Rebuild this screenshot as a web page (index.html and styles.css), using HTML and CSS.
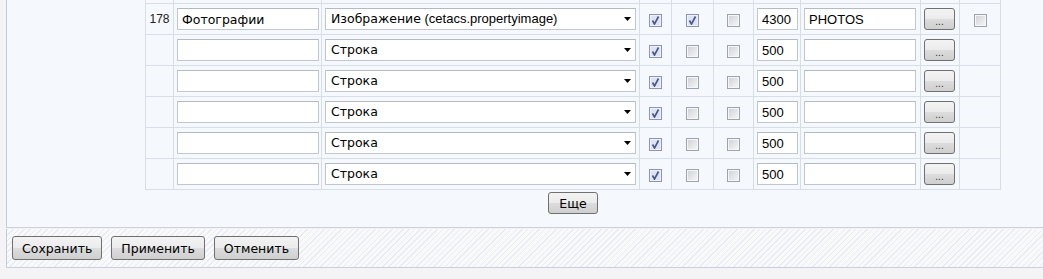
FILE: index.html
```html
<!DOCTYPE html>
<html lang="ru">
<head>
    <meta charset="UTF-8">
    <meta name="viewport" content="width=device-width, initial-scale=1.0">
    <title>Свойства инфоблока</title>
    <link rel="stylesheet" href="styles.css">
</head>
<body>

    <div class="page">

        <!-- Property list -->
        <div class="panel">
            <table class="props">
                <colgroup>
                    <col class="c-id">
                    <col class="c-name">
                    <col class="c-type">
                    <col class="c-flag">
                    <col class="c-flag2">
                    <col class="c-flag3">
                    <col class="c-sort">
                    <col class="c-code">
                    <col class="c-more">
                    <col class="c-del">
                </colgroup>
                <!-- previous row, scrolled out of view -->
                <tr class="gone">
                    <td></td><td></td><td></td><td></td><td></td>
                    <td></td><td></td><td></td><td></td><td></td>
                </tr>
                <tr>
                    <td class="id">178</td>
                    <td><input class="field name" type="text" value="Фотографии"></td>
                    <td><div class="field select"><span class="cyr">Изображение</span> (cetacs.propertyimage)</div></td>
                    <td class="mid"><input class="cb" type="checkbox" checked></td>
                    <td class="mid"><input class="cb" type="checkbox" checked></td>
                    <td class="mid"><input class="cb" type="checkbox"></td>
                    <td><input class="field sort" type="text" value="4300"></td>
                    <td><input class="field code" type="text" value="PHOTOS"></td>
                    <td><button class="btn small">...</button></td>
                    <td class="mid"><input class="cb" type="checkbox"></td>
                </tr>
                <tr>
                    <td class="id"></td>
                    <td><input class="field name" type="text" value=""></td>
                    <td><div class="field select"><span class="cyr">Строка</span></div></td>
                    <td class="mid"><input class="cb" type="checkbox" checked></td>
                    <td class="mid"><input class="cb" type="checkbox"></td>
                    <td class="mid"><input class="cb" type="checkbox"></td>
                    <td><input class="field sort" type="text" value="500"></td>
                    <td><input class="field code" type="text" value=""></td>
                    <td><button class="btn small">...</button></td>
                    <td></td>
                </tr>
                <tr>
                    <td class="id"></td>
                    <td><input class="field name" type="text" value=""></td>
                    <td><div class="field select"><span class="cyr">Строка</span></div></td>
                    <td class="mid"><input class="cb" type="checkbox" checked></td>
                    <td class="mid"><input class="cb" type="checkbox"></td>
                    <td class="mid"><input class="cb" type="checkbox"></td>
                    <td><input class="field sort" type="text" value="500"></td>
                    <td><input class="field code" type="text" value=""></td>
                    <td><button class="btn small">...</button></td>
                    <td></td>
                </tr>
                <tr>
                    <td class="id"></td>
                    <td><input class="field name" type="text" value=""></td>
                    <td><div class="field select"><span class="cyr">Строка</span></div></td>
                    <td class="mid"><input class="cb" type="checkbox" checked></td>
                    <td class="mid"><input class="cb" type="checkbox"></td>
                    <td class="mid"><input class="cb" type="checkbox"></td>
                    <td><input class="field sort" type="text" value="500"></td>
                    <td><input class="field code" type="text" value=""></td>
                    <td><button class="btn small">...</button></td>
                    <td></td>
                </tr>
                <tr>
                    <td class="id"></td>
                    <td><input class="field name" type="text" value=""></td>
                    <td><div class="field select"><span class="cyr">Строка</span></div></td>
                    <td class="mid"><input class="cb" type="checkbox" checked></td>
                    <td class="mid"><input class="cb" type="checkbox"></td>
                    <td class="mid"><input class="cb" type="checkbox"></td>
                    <td><input class="field sort" type="text" value="500"></td>
                    <td><input class="field code" type="text" value=""></td>
                    <td><button class="btn small">...</button></td>
                    <td></td>
                </tr>
                <tr>
                    <td class="id"></td>
                    <td><input class="field name" type="text" value=""></td>
                    <td><div class="field select"><span class="cyr">Строка</span></div></td>
                    <td class="mid"><input class="cb" type="checkbox" checked></td>
                    <td class="mid"><input class="cb" type="checkbox"></td>
                    <td class="mid"><input class="cb" type="checkbox"></td>
                    <td><input class="field sort" type="text" value="500"></td>
                    <td><input class="field code" type="text" value=""></td>
                    <td><button class="btn small">...</button></td>
                    <td></td>
                </tr>
            </table>

            <div class="more">
                <button class="btn">Еще</button>
            </div>
        </div>

        <!-- Form buttons -->
        <div class="footer">
            <button class="btn">Сохранить</button>
            <button class="btn">Применить</button>
            <button class="btn">Отменить</button>
        </div>

    </div>

</body>
</html>
```

FILE: styles.css
```css
/* Page */
body {
    margin: 0;
    background: #f4f4f6;
    font-family: "Liberation Sans", Arial, sans-serif;
    font-size: 13px;
    color: #000;
}

.page {
    padding-left: 6px;
}

/* Content panel */
.panel {
    display: flow-root;
    background: #f5f8fc;
    border-left: 1px solid #c3cad8;
    border-bottom: 1px solid #c9cfdb;
    padding-bottom: 13px;
}

/* Property table */
.props {
    margin: -28px 0 0 138px;
    border-collapse: collapse;
    table-layout: fixed;
    width: 856px;
}

.props td {
    border: 1px solid #d8dee8;
    padding: 4px 3px;
    height: 22px;
    vertical-align: middle;
}

.c-id { width: 28px; }
.c-name { width: 148px; }
.c-type { width: 318px; }
.c-flag { width: 32px; }
.c-flag2 { width: 42px; }
.c-flag3 { width: 40px; }
.c-sort { width: 47px; }
.c-code { width: 120px; }
.c-more { width: 39px; }
.c-del { width: 41px; }

.props td.id {
    text-align: center;
    font-size: 12px;
    color: #222;
}

.props td.mid {
    text-align: center;
}

/* Cyrillic text is drawn in a wider face */
.cyr,
.name,
.btn {
    font-family: "DejaVu Sans", Verdana, sans-serif;
}

/* Inputs */
.field {
    display: block;
    box-sizing: border-box;
    height: 22px;
    margin: 0;
    border: 1px solid #c2c7cf;
    border-top-color: #b4bac3;
    background: #fff;
    font-size: 13px;
    color: #000;
    padding: 0 4px;
    outline: none;
}

input.field {
    font-family: "Liberation Sans", Arial, sans-serif;
}

input.name {
    font-family: "DejaVu Sans", Verdana, sans-serif;
    font-size: 12.5px;
}

.name { width: 142px; }
.sort { width: 41px; }
.code { width: 112px; }

.select {
    width: 311px;
    line-height: 20px;
    padding: 0 20px 0 5px;
    white-space: nowrap;
    overflow: hidden;
    background: #fff url("data:image/svg+xml,%3Csvg xmlns='http://www.w3.org/2000/svg' width='7' height='4'%3E%3Cpath d='M0 0h7L3.5 4z' fill='%23000'/%3E%3C/svg%3E") no-repeat right 4px center;
}

.select .cyr {
    font-size: 12.5px;
}

/* Checkboxes, Vista look */
.cb {
    appearance: none;
    -webkit-appearance: none;
    box-sizing: border-box;
    width: 13px;
    height: 13px;
    margin: 0;
    vertical-align: middle;
    border: 1px solid #9ea4ad;
    background: linear-gradient(135deg, #cdd0d5, #f8f8f8);
    box-shadow: inset 0 0 0 1px #f6f6f6;
}

.cb:checked {
    border-color: #8e95b0;
    background: #dfe2f2 url("data:image/svg+xml,%3Csvg xmlns='http://www.w3.org/2000/svg' width='11' height='11'%3E%3Cpath d='M2.5 5.5l2 3.5L8.5 1.5' fill='none' stroke='%23485785' stroke-width='1.6'/%3E%3C/svg%3E") no-repeat center;
    box-shadow: inset 0 0 0 1px #eef0fa;
}

/* Buttons */
.btn {
    box-sizing: border-box;
    height: 24px;
    margin: 0;
    padding: 0 9px;
    border: 1px solid #707070;
    border-radius: 3px;
    background: linear-gradient(#f3f3f3, #ebebeb 50%, #dddddd 50%, #cfcfcf);
    font-size: 12.5px;
    color: #000;
}

.btn.small {
    display: block;
    width: 31px;
    height: 22px;
    padding: 5px 0 0;
    font-family: "Liberation Sans", Arial, sans-serif;
    font-size: 10px;
    color: #333;
}

.more {
    padding-top: 2px;
    width: 856px;
    margin-left: 138px;
    text-align: center;
}

.more .btn {
    height: 22px;
    padding: 0 10px;
}

/* Footer with form buttons */
.footer {
    display: flex;
    gap: 9px;
    margin-top: 1px;
    padding: 7px 0 7px 5px;
    border-left: 1px solid #c3cad8;
    border-bottom: 1px solid #c9cfdb;
    background: repeating-linear-gradient(135deg, #e9ebf1 0, #e9ebf1 1px, #f8f9fb 1px, #f8f9fb 4px);
}
```
